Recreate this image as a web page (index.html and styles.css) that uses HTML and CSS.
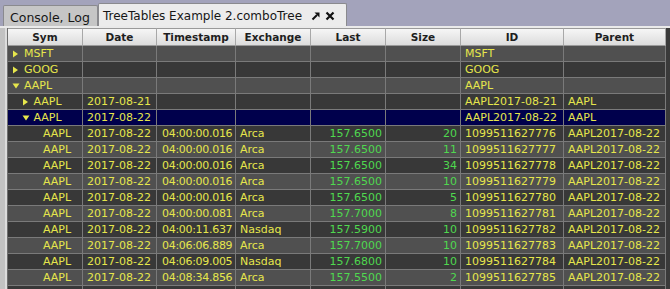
FILE: index.html
```html
<!DOCTYPE html>
<html>
<head>
<meta charset="utf-8">
<link rel="stylesheet" href="styles.css">
</head>
<body>
<div class="tabbar">
  <div class="tab inactive">Console, Log</div>
  <div class="tab active">
    <span class="tab-title">TreeTables Example 2.comboTree</span>
    <svg class="ico undock" width="10" height="10" viewBox="0 0 10 10"><path d="M1.5 8.5 L6 4" stroke="#111" stroke-width="2" fill="none"/><polygon points="3.5,1.5 8.5,1.5 8.5,6.5" fill="#111"/></svg>
    <svg class="ico close" width="10" height="10" viewBox="0 0 10 10"><path d="M1.5 1.5 L8.5 8.5 M8.5 1.5 L1.5 8.5" stroke="#111" stroke-width="2.2" fill="none"/></svg>
  </div>
</div>
<div class="sepline"></div>
<div class="content">
  <div class="leftstrip"></div>
  <div class="table">
    <div class="row head">
      <div class="c">Sym</div><div class="c">Date</div><div class="c">Timestamp</div><div class="c">Exchange</div><div class="c">Last</div><div class="c">Size</div><div class="c">ID</div><div class="c">Parent</div>
    </div>
    <div class="row light">
      <div class="c sym l0"><svg class="tri" width="12" height="8" viewBox="0 0 12 8"><polygon points="1,0.5 6,4 1,7.5" fill="#e6e64c"/></svg>MSFT</div><div class="c"></div><div class="c"></div><div class="c"></div><div class="c"></div><div class="c"></div><div class="c">MSFT</div><div class="c"></div>
    </div>
    <div class="row dark">
      <div class="c sym l0"><svg class="tri" width="12" height="8" viewBox="0 0 12 8"><polygon points="1,0.5 6,4 1,7.5" fill="#e6e64c"/></svg>GOOG</div><div class="c"></div><div class="c"></div><div class="c"></div><div class="c"></div><div class="c"></div><div class="c">GOOG</div><div class="c"></div>
    </div>
    <div class="row light">
      <div class="c sym l0"><svg class="tri" width="12" height="8" viewBox="0 0 12 8"><polygon points="0.5,1.5 7.5,1.5 4,6.5" fill="#e6e64c"/></svg>AAPL</div><div class="c"></div><div class="c"></div><div class="c"></div><div class="c"></div><div class="c"></div><div class="c">AAPL</div><div class="c"></div>
    </div>
    <div class="row dark">
      <div class="c sym l1"><svg class="tri" width="12" height="8" viewBox="0 0 12 8"><polygon points="1,0.5 6,4 1,7.5" fill="#e6e64c"/></svg>AAPL</div><div class="c">2017-08-21</div><div class="c"></div><div class="c"></div><div class="c"></div><div class="c"></div><div class="c">AAPL2017-08-21</div><div class="c">AAPL</div>
    </div>
    <div class="row sel">
      <div class="c sym l1"><svg class="tri" width="12" height="8" viewBox="0 0 12 8"><polygon points="0.5,1.5 7.5,1.5 4,6.5" fill="#e6e64c"/></svg>AAPL</div><div class="c">2017-08-22</div><div class="c"></div><div class="c"></div><div class="c"></div><div class="c"></div><div class="c">AAPL2017-08-22</div><div class="c">AAPL</div>
    </div>
    <div class="row dark">
      <div class="c sym l2">AAPL</div><div class="c">2017-08-22</div><div class="c ts">04:00:00.016</div><div class="c">Arca</div><div class="c num">157.6500</div><div class="c num">20</div><div class="c">1099511627776</div><div class="c">AAPL2017-08-22</div>
    </div>
    <div class="row light">
      <div class="c sym l2">AAPL</div><div class="c">2017-08-22</div><div class="c ts">04:00:00.016</div><div class="c">Arca</div><div class="c num">157.6500</div><div class="c num">11</div><div class="c">1099511627777</div><div class="c">AAPL2017-08-22</div>
    </div>
    <div class="row dark">
      <div class="c sym l2">AAPL</div><div class="c">2017-08-22</div><div class="c ts">04:00:00.016</div><div class="c">Arca</div><div class="c num">157.6500</div><div class="c num">34</div><div class="c">1099511627778</div><div class="c">AAPL2017-08-22</div>
    </div>
    <div class="row light">
      <div class="c sym l2">AAPL</div><div class="c">2017-08-22</div><div class="c ts">04:00:00.016</div><div class="c">Arca</div><div class="c num">157.6500</div><div class="c num">10</div><div class="c">1099511627779</div><div class="c">AAPL2017-08-22</div>
    </div>
    <div class="row dark">
      <div class="c sym l2">AAPL</div><div class="c">2017-08-22</div><div class="c ts">04:00:00.016</div><div class="c">Arca</div><div class="c num">157.6500</div><div class="c num">5</div><div class="c">1099511627780</div><div class="c">AAPL2017-08-22</div>
    </div>
    <div class="row light">
      <div class="c sym l2">AAPL</div><div class="c">2017-08-22</div><div class="c ts">04:00:00.081</div><div class="c">Arca</div><div class="c num">157.7000</div><div class="c num">8</div><div class="c">1099511627781</div><div class="c">AAPL2017-08-22</div>
    </div>
    <div class="row dark">
      <div class="c sym l2">AAPL</div><div class="c">2017-08-22</div><div class="c ts">04:00:11.637</div><div class="c">Nasdaq</div><div class="c num">157.5900</div><div class="c num">10</div><div class="c">1099511627782</div><div class="c">AAPL2017-08-22</div>
    </div>
    <div class="row light">
      <div class="c sym l2">AAPL</div><div class="c">2017-08-22</div><div class="c ts">04:06:06.889</div><div class="c">Arca</div><div class="c num">157.7000</div><div class="c num">10</div><div class="c">1099511627783</div><div class="c">AAPL2017-08-22</div>
    </div>
    <div class="row dark">
      <div class="c sym l2">AAPL</div><div class="c">2017-08-22</div><div class="c ts">04:06:09.005</div><div class="c">Nasdaq</div><div class="c num">157.6800</div><div class="c num">10</div><div class="c">1099511627784</div><div class="c">AAPL2017-08-22</div>
    </div>
    <div class="row light">
      <div class="c sym l2">AAPL</div><div class="c">2017-08-22</div><div class="c ts">04:08:34.856</div><div class="c">Arca</div><div class="c num">157.5500</div><div class="c num">2</div><div class="c">1099511627785</div><div class="c">AAPL2017-08-22</div>
    </div>
    <div class="row dark">
      <div class="c"></div><div class="c"></div><div class="c"></div><div class="c"></div><div class="c"></div><div class="c"></div><div class="c"></div><div class="c"></div>
    </div>
  </div>
  <div class="rightstrip"></div>
</div>
</body>
</html>
```

FILE: styles.css
```css
html, body {
  margin: 0;
  padding: 0;
}
body {
  width: 670px;
  height: 289px;
  overflow: hidden;
  background: #c4c4c4;
  font-family: "DejaVu Sans", "Liberation Sans", sans-serif;
}
.tabbar {
  height: 26px;
  background: #a3a3bb;
  display: flex;
  align-items: flex-end;
  padding-left: 3px;
  box-sizing: border-box;
}
.tab {
  box-sizing: border-box;
  font-size: 12px;
  color: #161616;
  display: flex;
  align-items: center;
  border: 1px solid #8a8a8e;
  border-bottom: none;
  border-radius: 2px 2px 0 0;
}
.tab.inactive {
  width: 95px;
  height: 21px;
  background: #c6c6c6;
  padding-left: 6px;
  padding-top: 2px;
  font-size: 12.5px;
}
.tab.active {
  width: 249px;
  height: 23px;
  background: #ececec;
  padding-left: 4px;
  padding-top: 1px;
}
.tab-title {
  margin-right: 9px;
}
.ico {
  display: block;
}
.undock {
  margin-right: 4px;
}
.sepline {
  height: 2px;
  background: #eaeaea;
}
.content {
  display: flex;
  height: 261px;
}
.leftstrip {
  width: 7px;
  background: linear-gradient(to right, #c2c2c2 0, #c2c2c2 5px, #dcdcdc 5px, #dcdcdc 7px);
}
.rightstrip {
  width: 4px;
  background: #3a3a3a;
}
.table {
  width: 659px;
  border-left: 1px solid #6e6e6e;
  box-sizing: border-box;
  background: #3a3a3a;
}
.row {
  display: grid;
  grid-template-columns: 75px 74px 79px 75px 75px 75px 103px 102px;
  height: 16px;
}
.row .c {
  box-sizing: border-box;
  border-right: 1px solid #7a7a7a;
  border-bottom: 1px solid #7a7a7a;
  font-size: 11px;
  line-height: 15px;
  color: #e6e64c;
  padding-left: 4px;
  white-space: nowrap;
  overflow: hidden;
  display: flex;
  align-items: center;
}
.row .c.ts {
  letter-spacing: -0.3px;
  padding-left: 5px;
}
.row.head {
  height: 18px;
}
.row.head .c {
  background: linear-gradient(#f6f6f6, #dcdcdc);
  border-top: 1px solid #9a9a9a;
  border-right: 1px solid #a8a8a8;
  border-bottom: 1px solid #9a9a9a;
  color: #1e1e1e;
  font-weight: bold;
  font-size: 10.5px;
  justify-content: center;
  padding-left: 0;
}
.row.light .c { background: #505050; }
.row.dark .c { background: #383838; }
.row.sel .c { background: #00004c; }
.row .c.num {
  color: #4fd84f;
  justify-content: flex-end;
  padding-left: 0;
  padding-right: 3px;
}
.tri {
  display: block;
  flex: none;
}
.sym.l0 { padding-left: 4px; }
.sym.l1 { padding-left: 13.5px; }
.sym.l2 { padding-left: 35px; }
```
